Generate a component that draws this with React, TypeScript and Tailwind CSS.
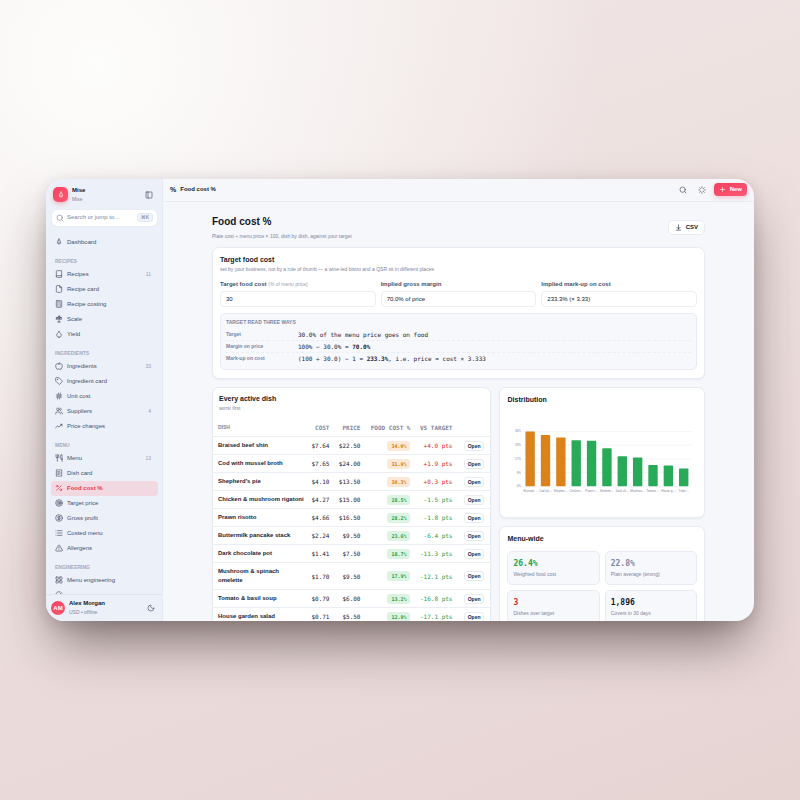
import type { ComponentType, ReactNode } from "react";
import {
  Book, File, Calculator, Droplet, Apple, Tag, Hash, Users, Utensils, ReceiptText, Percent,
  Target, CircleDollarSign, List, TriangleAlert, LayoutGrid, Search, PanelLeft, Moon, Loader,
  Plus, ArrowDownToLine, CircleGauge,
} from "lucide-react";

type IconProps = { className?: string };
type NavItem = { label: string; icon: ComponentType<IconProps>; count?: number };
type NavGroup = { title: string; items: NavItem[] };

function FlameIcon({ className }: IconProps) {
  return (
    <svg viewBox="0 0 24 24" fill="none" stroke="currentColor" strokeWidth="2.2" strokeLinecap="round" strokeLinejoin="round" className={className}>
      <path d="M12 3c.4 3.400 4.800 5.600 4.800 10.200a4.800 4.800 0 0 1-9.600 0c0-2.400 1.100-3.900 2.400-5.200" />
      <path d="M12 3c-.3 2.300-1 3.600-2.400 5" />
      <path d="M12 12.500v2" />
    </svg>
  );
}

function ScaleIcon({ className }: IconProps) {
  return (
    <svg viewBox="0 0 24 24" fill="none" stroke="currentColor" strokeWidth="2.2" strokeLinecap="round" strokeLinejoin="round" className={className}>
      <path d="M12 3v18" />
      <path d="M8 21h8" />
      <path d="M4 8h16" />
      <path d="M4 12.500h6L7 8z" />
      <path d="M14 12.500h6L17 8z" />
      <path d="M12 3l-2 2h4z" />
    </svg>
  );
}

function TrendIcon({ className }: IconProps) {
  return (
    <svg viewBox="0 0 24 24" fill="none" stroke="currentColor" strokeWidth="2.2" strokeLinecap="round" strokeLinejoin="round" className={className}>
      <path d="M2 17l6-5 4 3 9-8" />
      <path d="M16.500 7H21v4.500" />
    </svg>
  );
}

const groups: NavGroup[] = [
  {
    title: "RECIPES",
    items: [
      { label: "Recipes", icon: Book, count: 11 },
      { label: "Recipe card", icon: File },
      { label: "Recipe costing", icon: Calculator },
      { label: "Scale", icon: ScaleIcon },
      { label: "Yield", icon: Droplet },
    ],
  },
  {
    title: "INGREDIENTS",
    items: [
      { label: "Ingredients", icon: Apple, count: 33 },
      { label: "Ingredient card", icon: Tag },
      { label: "Unit cost", icon: Hash },
      { label: "Suppliers", icon: Users, count: 4 },
      { label: "Price changes", icon: TrendIcon },
    ],
  },
  {
    title: "MENU",
    items: [
      { label: "Menu", icon: Utensils, count: 13 },
      { label: "Dish card", icon: ReceiptText },
      { label: "Food cost %", icon: Percent },
      { label: "Target price", icon: Target },
      { label: "Gross profit", icon: CircleDollarSign },
      { label: "Costed menu", icon: List },
      { label: "Allergens", icon: TriangleAlert },
    ],
  },
  {
    title: "ENGINEERING",
    items: [{ label: "Menu engineering", icon: LayoutGrid }],
  },
];

const dishes = [
  { name: "Braised beef shin", cost: "$7.64", price: "$22.50", pct: 34.0, diff: "+4.0 pts" },
  { name: "Cod with mussel broth", cost: "$7.65", price: "$24.00", pct: 31.9, diff: "+1.9 pts" },
  { name: "Shepherd's pie", cost: "$4.10", price: "$13.50", pct: 30.3, diff: "+0.3 pts" },
  { name: "Chicken & mushroom rigatoni", cost: "$4.27", price: "$15.00", pct: 28.5, diff: "-1.5 pts" },
  { name: "Prawn risotto", cost: "$4.66", price: "$16.50", pct: 28.2, diff: "-1.8 pts" },
  { name: "Buttermilk pancake stack", cost: "$2.24", price: "$9.50", pct: 23.6, diff: "-6.4 pts" },
  { name: "Dark chocolate pot", cost: "$1.41", price: "$7.50", pct: 18.7, diff: "-11.3 pts" },
  { name: "Mushroom & spinach omelette", cost: "$1.70", price: "$9.50", pct: 17.9, diff: "-12.1 pts" },
  { name: "Tomato & basil soup", cost: "$0.79", price: "$6.00", pct: 13.2, diff: "-16.8 pts" },
  { name: "House garden salad", cost: "$0.71", price: "$5.50", pct: 12.9, diff: "-17.1 pts" },
];

const bars = [
  { label: "Braised…", value: 34.0 },
  { label: "Cod wit…", value: 31.9 },
  { label: "Shepher…", value: 30.3 },
  { label: "Chicken…", value: 28.5 },
  { label: "Prawn r…", value: 28.2 },
  { label: "Butterm…", value: 23.6 },
  { label: "Dark ch…", value: 18.7 },
  { label: "Mushroo…", value: 17.9 },
  { label: "Tomato …", value: 13.2 },
  { label: "House g…", value: 12.9 },
  { label: "Triple…", value: 11.1 },
];

const ticks = ["34%", "26%", "17%", "9%", "0%"];

function Card({ className = "", children }: { className?: string; children: ReactNode }) {
  return (
    <section className={`rounded-[7px] border border-[#e8ebf3] bg-white shadow-[0_1px_2px_rgba(30,41,80,0.06)] ${className}`}>
      {children}
    </section>
  );
}

function NavLink({ item, active }: { item: NavItem; active?: boolean }) {
  const Icon = item.icon;
  return (
    <a
      href="#"
      aria-current={active ? "page" : undefined}
      className={`flex h-[15px] items-center gap-[4px] rounded-[4px] px-[4px] text-[6px] ${active ? "bg-[#f2d8e1] font-bold text-[#f0354f]" : "text-[#48506b]"}`}
    >
      <Icon className="size-[8px] shrink-0" />
      <span className="flex-1">{item.label}</span>
      {item.count && <span className="pr-[3px] text-[5px] text-[#959db3]">{item.count}</span>}
    </a>
  );
}

function Sidebar() {
  return (
    <aside className="flex w-[117px] shrink-0 flex-col border-r border-[#e6eaf3] bg-[#ecf0f8]">
      <div className="flex items-center gap-[4px] px-[7px] pt-[7px]">
        <span className="flex size-[15px] items-center justify-center rounded-[5px] bg-linear-to-br from-[#f43f5e] to-[#fb5a75] text-white shadow-[0_2px_4px_rgba(244,63,94,0.3)]">
          <FlameIcon className="size-[8px]" />
        </span>
        <div className="flex-1 leading-[9px]">
          <div className="text-[6px] font-bold text-[#10172a]">Mise</div>
          <div className="text-[5px] text-[#7d86a0]">Mise</div>
        </div>
        <button type="button" aria-label="Collapse sidebar" className="mr-[2px] text-[#48506b]">
          <PanelLeft className="block size-[8px]" />
        </button>
      </div>

      <label className="mr-[5px] ml-[6px] mt-[6px] flex h-[16px] shrink-0 items-center gap-[3px] rounded-[5px] bg-white px-[4px] shadow-[0_0_1px_rgba(30,41,80,0.15)]">
        <Search className="size-[8px] shrink-0 text-[#7d86a0]" />
        <input
          type="text"
          aria-label="Search"
          placeholder="Search or jump to…"
          className="w-0 flex-1 text-[6px] outline-none placeholder:text-[#7d86a0]"
        />
        <kbd className="flex h-[9px] items-center rounded-[3px] border border-[#e3e7f0] bg-[#eff2f8] px-[3px] font-['Liberation_Sans','DejaVu_Sans',sans-serif] text-[5px] text-[#6b748e]">⌘K</kbd>
      </label>

      <nav className="min-h-0 flex-1 overflow-hidden pt-[9px] pr-[4px] pl-[5px]">
        <NavLink item={{ label: "Dashboard", icon: FlameIcon }} />
        {groups.map((group) => (
          <div key={group.title}>
            <h2 className="px-[4px] pt-[8px] pb-[2px] text-[5px] leading-[7px] font-bold text-[#a4abbf]">{group.title}</h2>
            {group.items.map((item) => (
              <NavLink key={item.label} item={item} active={item.label === "Food cost %"} />
            ))}
          </div>
        ))}
        <a href="#" aria-label="Popularity" className="flex h-[15px] items-center px-[4px] text-[#48506b]">
          <CircleGauge className="size-[8px]" />
        </a>
      </nav>

      <div className="flex h-[27px] shrink-0 items-center gap-[4px] border-t border-[#e0e4ee] px-[5px]">
        <span className="flex size-[14px] items-center justify-center rounded-full bg-linear-to-br from-[#f43f5e] to-[#fb5a75] text-[6px] font-bold text-white">AM</span>
        <div className="flex-1 leading-[9px]">
          <div className="text-[6px] font-bold text-[#10172a]">Alex Morgan</div>
          <div className="text-[5px] text-[#7d86a0]">USD • offline</div>
        </div>
        <button type="button" aria-label="Dark mode" className="mr-[2px] text-[#48506b]">
          <Moon className="block size-[8px]" />
        </button>
      </div>
    </aside>
  );
}

function TopBar() {
  return (
    <header className="flex h-[23px] shrink-0 items-center gap-[4px] border-b border-[#e8ebf3] px-[7px] text-[#10172a]">
      <span className="text-[7px] font-bold">%</span>
      <span className="flex-1 text-[6px] font-bold">Food cost %</span>
      <div className="flex items-center gap-[11px] text-[#48506b]">
        <button type="button" aria-label="Search">
          <Search className="block size-[8px]" />
        </button>
        <button type="button" aria-label="Theme">
          <Loader className="block size-[8px]" />
        </button>
      </div>
      <button type="button" className="ml-[4px] flex h-[13px] items-center gap-[4px] rounded-[4px] bg-linear-to-br from-[#f43f5e] to-[#fb5a75] px-[5px] text-[6px] font-bold text-white shadow-[0_2px_4px_rgba(244,63,94,0.25)]">
        <Plus className="size-[7px]" />
        New
      </button>
    </header>
  );
}

function Field({ id, label, hint, value }: { id: string; label: string; hint?: string; value: string }) {
  return (
    <div className="flex min-w-0 flex-1 flex-col gap-[3px]">
      <label htmlFor={id} className="text-[6px] leading-[8px] font-bold whitespace-nowrap text-[#48506b]">
        {label} {hint && <span className="text-[5px] font-normal text-[#959db3]">{hint}</span>}
      </label>
      <input
        id={id}
        type="text"
        defaultValue={value}
        className="h-[16px] w-full rounded-[4px] border border-[#eceef5] bg-white px-[5px] text-[6px] text-[#10172a] outline-none"
      />
    </div>
  );
}

function ReadRow({ label, children }: { label: string; children: ReactNode }) {
  return (
    <div className="flex h-[12px] items-center border-b border-dashed border-[#eceef5] last:border-b-0">
      <dt className="w-[72px] text-[5px] font-bold text-[#7d86a0]">{label}</dt>
      <dd className="font-['DejaVu_Sans_Mono',monospace] text-[6px] text-[#1c2438]">{children}</dd>
    </div>
  );
}

function TargetCard() {
  return (
    <Card className="mt-[6px] px-[7px] pt-[7px] pb-[8px]">
      <h2 className="text-[7px] leading-[10px] font-bold text-[#10172a]">Target food cost</h2>
      <p className="text-[5px] leading-[9px] text-[#7d86a0]">
        set by your business, not by a rule of thumb — a wine-led bistro and a QSR sit in different places
      </p>
      <div className="mt-[6px] flex gap-[5px]">
        <Field id="target" label="Target food cost" hint="(% of menu price)" value="30" />
        <Field id="margin" label="Implied gross margin" value="70.0% of price" />
        <Field id="markup" label="Implied mark-up on cost" value="233.3% (× 3.33)" />
      </div>
      <div className="mt-[6px] rounded-[5px] border border-[#e8ebf3] bg-[#f6f8fc] px-[5px] pt-[4px] pb-[4px]">
        <h3 className="mb-[3px] text-[5px] leading-[8px] font-bold text-[#7d86a0]">TARGET READ THREE WAYS</h3>
        <dl>
          <ReadRow label="Target">30.0% of the menu price goes on food</ReadRow>
          <ReadRow label="Margin on price">100% − 30.0% = <b>70.0%</b></ReadRow>
          <ReadRow label="Mark-up on cost">(100 ÷ 30.0) − 1 = <b>233.3%</b>, i.e. price = cost × 3.333</ReadRow>
        </dl>
      </div>
    </Card>
  );
}

function DishTable() {
  return (
    <Card className="overflow-hidden">
      <div className="px-[6px] pt-[6px]">
        <h2 className="text-[7px] leading-[10px] font-bold text-[#10172a]">Every active dish</h2>
        <p className="text-[5px] leading-[9px] text-[#7d86a0]">worst first</p>
      </div>
      <table className="mt-[6px] w-full table-fixed border-collapse text-[6px]">
        <colgroup>
          <col />
          <col className="w-[26px]" />
          <col className="w-[31px]" />
          <col className="w-[50px]" />
          <col className="w-[42px]" />
          <col className="w-[32px]" />
        </colgroup>
        <thead>
          <tr className="h-[18px] border-b border-[#eceef5] text-right font-['DejaVu_Sans_Mono',monospace] whitespace-nowrap text-[#7d86a0]">
            <th className="pl-[5px] text-left font-['Liberation_Sans',sans-serif] text-[5px] font-bold">DISH</th>
            <th className="pr-[6px] font-bold">COST</th>
            <th className="pr-[6px] font-bold">PRICE</th>
            <th className="pr-[6px] font-bold">FOOD COST %</th>
            <th className="pr-[6px] font-bold">VS TARGET</th>
            <td />
          </tr>
        </thead>
        <tbody>
          {dishes.map((dish) => {
            const over = dish.pct > 30;
            return (
              <tr key={dish.name} className="h-[18px] border-b border-[#eceef5] text-right font-['DejaVu_Sans_Mono',monospace] text-[#1c2438]">
                <td className="py-[4px] pr-[5px] pl-[5px] text-left font-['Liberation_Sans',sans-serif] leading-[9px] font-bold">
                  <div className="max-w-[87px]">{dish.name}</div>
                </td>
                <td className="pr-[6px]">{dish.cost}</td>
                <td className="pr-[6px]">{dish.price}</td>
                <td className="pr-[6px] text-[5px]">
                  <span className={`inline-block rounded-[3px] px-[4px] leading-[10px] font-bold ${over ? "bg-[#fbe9d7] text-[#d97706]" : "bg-[#dcf3e4] text-[#16a34a]"}`}>
                    {dish.pct.toFixed(1)}%
                  </span>
                </td>
                <td className={`pr-[6px] whitespace-nowrap ${over ? "text-[#dc2626]" : "text-[#16a34a]"}`}>{dish.diff}</td>
                <td className="pr-[6px] text-[5px]">
                  <button type="button" className="rounded-[3px] border border-[#e8ebf3] bg-white px-[3px] font-['Liberation_Sans',sans-serif] leading-[8px] font-bold">
                    Open
                  </button>
                </td>
              </tr>
            );
          })}
        </tbody>
      </table>
    </Card>
  );
}

function Chart() {
  return (
    <svg viewBox="0 0 190 66" className="mt-[24px] mb-[22px] block w-full" role="img" aria-label="Food cost by dish">
      {ticks.map((tick, i) => (
        <g key={tick}>
          <line x1="16" x2="185" y1={2.5 + i * 13.75} y2={2.5 + i * 13.75} stroke="#e8ebf3" strokeWidth="0.5" />
          <text x="14" y={3.5 + i * 13.75} textAnchor="end" fontSize="3" fill="#7d86a0">{tick}</text>
        </g>
      ))}
      {bars.map((bar, i) => {
        const height = (bar.value / 34) * 55;
        return (
          <g key={bar.label}>
            <rect
              x={18.5 + i * 15.4}
              y={57.5 - height}
              width="9.4"
              height={height}
              rx="0.8"
              fill={bar.value > 30 ? "#d97706" : "#16a34a"}
              fillOpacity="0.92"
            />
            <text x={23.2 + i * 15.4} y="63.5" textAnchor="middle" fontSize="3" fill="#7d86a0">{bar.label}</text>
          </g>
        );
      })}
    </svg>
  );
}

function Stat({ value, label, color }: { value: string; label: string; color: string }) {
  return (
    <div className="rounded-[5px] border border-[#e8ebf3] bg-[#f6f8fc] px-[5px] pt-[6px] pb-[5px]">
      <div className={`font-['DejaVu_Sans_Mono',monospace] text-[8px] leading-[12px] font-bold ${color}`}>{value}</div>
      <div className="text-[5px] leading-[9px] text-[#7d86a0]">{label}</div>
    </div>
  );
}

export default function App() {
  return (
    <div className="flex min-h-screen items-center justify-center bg-[radial-gradient(circle_at_12%_8%,#fdfdfc_0%,rgba(253,253,252,0)_50%),linear-gradient(160deg,#f1e8e7_0%,#e6d4d3_100%)] p-[46px] font-['Liberation_Sans',sans-serif]">
      <div className="flex aspect-[8/5] w-full overflow-hidden rounded-[18px] bg-[#f5f7fb] shadow-[0_28px_52px_-8px_rgba(40,25,25,0.55),0_4px_14px_rgba(40,25,25,0.12)]">
        <Sidebar />
        <div className="flex min-w-0 flex-1 flex-col">
          <TopBar />
          <main className="min-h-0 flex-1 overflow-hidden">
            <div className="mx-auto max-w-[493px] pt-[13px]">
              <div className="flex items-center justify-between">
                <div>
                  <h1 className="text-[10px] leading-[14px] font-bold text-[#10172a]">Food cost %</h1>
                  <p className="mt-[2px] text-[5px] leading-[10px] text-[#7d86a0]">Plate cost ÷ menu price × 100, dish by dish, against your target</p>
                </div>
                <button type="button" className="flex h-[15px] items-center gap-[4px] rounded-[5px] border border-[#e8ebf3] bg-white px-[6px] text-[6px] font-bold text-[#10172a]">
                  <ArrowDownToLine className="size-[7px]" />
                  CSV
                </button>
              </div>
              <TargetCard />
              <div className="mt-[8px] grid grid-cols-[1.36fr_1fr] items-start gap-[8px]">
                <DishTable />
                <div className="flex flex-col gap-[8px]">
                  <Card className="px-[7px] pt-[7px]">
                    <h2 className="text-[7px] leading-[10px] font-bold text-[#10172a]">Distribution</h2>
                    <Chart />
                  </Card>
                  <Card className="px-[7px] pt-[7px] pb-[7px]">
                    <h2 className="text-[7px] leading-[10px] font-bold text-[#10172a]">Menu-wide</h2>
                    <div className="mt-[7px] grid grid-cols-2 gap-[5px]">
                      <Stat value="26.4%" label="Weighted food cost" color="text-[#16a34a]" />
                      <Stat value="22.8%" label="Plain average (wrong)" color="text-[#7d86a0]" />
                      <Stat value="3" label="Dishes over target" color="text-[#dc2626]" />
                      <Stat value="1,896" label="Covers in 30 days" color="text-[#10172a]" />
                    </div>
                  </Card>
                </div>
              </div>
            </div>
          </main>
        </div>
      </div>
    </div>
  );
}
